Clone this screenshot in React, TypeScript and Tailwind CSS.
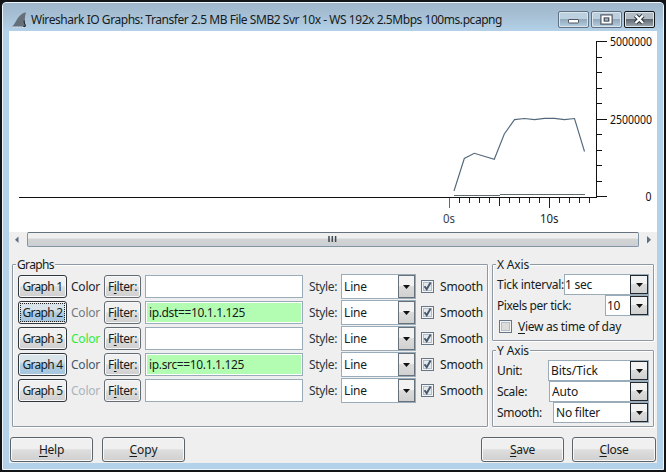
import React, { useLayoutEffect, useRef, useState } from "react";

/** Text drawn at an exact width by spreading the difference over its letters. */
function Fit({ text, w, cls = "", u }: { text: string; w: number; cls?: string; u?: number }) {
  const ref = useRef<HTMLSpanElement>(null);
  const [gap, setGap] = useState(0);
  useLayoutEffect(() => {
    const el = ref.current;
    if (el) setGap((w - el.getBoundingClientRect().width) / text.length);
  }, [text, w]);
  return (
    <span className={`block shrink-0 whitespace-pre ${cls}`} style={{ width: w }}>
      <span ref={ref} className="inline-block" style={{ letterSpacing: gap }}>
        {u === undefined ? (
          text
        ) : (
          <>
            {text.slice(0, u)}
            <span className="underline underline-offset-2">{text[u]}</span>
            {text.slice(u + 1)}
          </>
        )}
      </span>
    </span>
  );
}

function Shark() {
  return (
    <svg width="15" height="16" viewBox="0 0 15 16" className="ml-[9px] mt-[9px] shrink-0">
      <path d="M0 14.6C4 12 5 2 14 0.2C12.4 5 12.4 10 14 14.6Z" fill="#66707a" />
      <path d="M12.2 8.5V11L13.3 13V14.5H11" stroke="#20262c" fill="none" />
      <path d="M1 15.3H14" stroke="#d5dde2" strokeDasharray="2 1" />
    </svg>
  );
}

function TitleButton({ kind }: { kind: "min" | "max" | "close" }) {
  const tone =
    kind === "close"
      ? "border-[#14191d] bg-linear-to-b from-[#b3bcc4] from-45% via-[#606a73] via-50% to-[#a3abb2]"
      : "border-[#5f7182] bg-linear-to-b from-[#bdd0df] from-45% via-[#93a9bc] via-50% to-[#b6cfe2]";
  return (
    <div className={`flex h-[17px] w-[31px] items-center justify-center rounded-[2px] border shadow-[inset_0_0_0_1px_#dce5eb] ${tone}`}>
      <svg width="15" height="13" viewBox="0 0 15 13">
        {kind === "min" && <rect x="2.5" y="6.5" width="10" height="3.5" rx="0.5" fill="#fff" stroke="#505761" />}
        {kind === "max" && (
          <>
            <rect x="3" y="3" width="9" height="7" fill="none" stroke="#505761" strokeWidth="3.4" />
            <rect x="3.5" y="3.5" width="8" height="6" fill="none" stroke="#fff" strokeWidth="2" />
            <rect x="5.5" y="5" width="4" height="3" fill="#a7bccd" stroke="#505761" />
          </>
        )}
        {kind === "close" && (
          <>
            <path d="M3.5 2.5L11 10M11 2.5L3.5 10" stroke="#2c3339" strokeWidth="4.4" />
            <path d="M3.5 2.5L11 10M11 2.5L3.5 10" stroke="#fff" strokeWidth="2.4" />
          </>
        )}
      </svg>
    </div>
  );
}

const minorY = [57.5, 72.5, 88.5, 103.5, 134.5, 150.5, 165.5, 181.5];

function Chart() {
  const ticks = Array.from({ length: 15 }, (_, i) => 449.5 + i * 10);
  return (
    <svg width="648" height="201" viewBox="9 31 648 201" className="block bg-white" fontFamily="'Noto Sans', sans-serif" fontSize="12" fill="#111">
      <g stroke="#111" fill="none" shapeRendering="crispEdges">
        <path d="M19 197.5H597" />
        <path d="M596.5 41V197" />
        <path d="M596 41.5H607M596 119.5H607M596 196.5H607" />
        {minorY.map((y) => (
          <path key={y} d={`M596 ${y}H602`} />
        ))}
        {ticks.map((x, i) => (
          <path key={x} d={`M${x} 198V${i % 10 === 0 ? 208 : i === 5 ? 206 : 203}`} stroke={i === 0 ? "#5b6b79" : "#222"} />
        ))}
      </g>
      <path
        d="M454 191L464.3 158.5L474.3 153.3L494.3 159.3L504.3 134L514.5 119.6L524.5 118.5L534.5 119.6L544.5 118.4L554.5 118.4L564.5 119.6L574.5 118.5L584.5 151.5"
        fill="none"
        stroke="#53687c"
        strokeWidth="1.15"
      />
      <path d="M454 195.5H500M500 194.5H585" stroke="#606b70" />
      <text x="610" y="46" textLength="42" lengthAdjust="spacingAndGlyphs">5000000</text>
      <text x="610" y="124" textLength="42" lengthAdjust="spacingAndGlyphs">2500000</text>
      <text x="645.5" y="201" textLength="6" lengthAdjust="spacingAndGlyphs">0</text>
      <text x="443" y="223" textLength="12" lengthAdjust="spacingAndGlyphs" fill="#37424c">0s</text>
      <text x="540" y="223" textLength="18.5" lengthAdjust="spacingAndGlyphs" fill="#222">10s</text>
    </svg>
  );
}

function ScrollBar() {
  return (
    <div className="flex h-4 items-center bg-[#efefef]">
      <svg width="18" height="16" viewBox="0 0 18 16">
        <path d="M9.5 4.5V11L6 7.7Z" fill="#5f7080" />
      </svg>
      <div className="flex h-[15px] w-[612px] items-center justify-center self-start rounded-[2px] border border-[#8195a5] border-t-[#65727d] bg-linear-to-b from-[#efefef] from-40% via-[#d3d3d3] via-45% to-[#cbd0d4]">
        <svg width="9" height="7" viewBox="0 0 9 7" className="mb-px mr-[2px]">
          <path d="M1 0V6M4.3 0V6M7.6 0V6" stroke="#3d4852" strokeWidth="1.5" />
        </svg>
      </div>
      <svg width="18" height="16" viewBox="0 0 18 16">
        <path d="M8 4V11.5L12 7.7Z" fill="#5f7080" />
      </svg>
    </div>
  );
}

function Panel({ title, tw, cls, children }: { title: string; tw: number; cls: string; children: React.ReactNode }) {
  return (
    <div className={`relative rounded-[1px] border border-[#8d9aa5] shadow-[1px_1px_0_#fff,inset_1px_1px_0_#fff] ${cls}`}>
      <div className="absolute -top-[9px] left-[3px] h-[17px] bg-[#efefef] px-px leading-[17px]">
        <Fit text={title} w={tw} />
      </div>
      {children}
    </div>
  );
}

function Combo({ value, w, vw, h, wide, pl = "pl-[2px]", dark }: { value: string; w: string; vw: number; h: string; wide?: boolean; pl?: string; dark?: boolean }) {
  return (
    <div className={`flex shrink-0 items-stretch border border-[#9aabb9] bg-white ${w} ${h}`}>
      <div className={`flex flex-1 items-center ${pl}`}>
        <Fit text={value} w={vw} />
      </div>
      <div
        className={`flex items-center justify-center border bg-linear-to-b from-[#f2f2f2] from-45% via-[#dcdcdc] via-50% to-[#d0d0d0] ${wide ? "w-[18px]" : "w-[17px]"} ${
          dark ? "border-[#22282d]" : "border-[#66717b]"
        }`}
      >
        <svg width="7" height="4" viewBox="0 0 7 4">
          <path d="M0 0H7L3.5 4Z" fill="#111" />
        </svg>
      </div>
    </div>
  );
}

function Check({ on }: { on?: boolean }) {
  return (
    <svg width="13" height="13" viewBox="0 0 13 13" className="shrink-0">
      <rect x="0.5" y="0.5" width="12" height="12" fill="#f4f4f4" stroke="#667686" />
      <rect x="2.5" y="2.5" width="8" height="8" fill={on ? "#e4e9ed" : "#dcdcdc"} stroke="#b5bec6" />
      {on && <path d="M3.5 6.3L5.7 9.3L9.6 2.5" fill="none" stroke="#43586d" strokeWidth="1.9" />}
    </svg>
  );
}

const grey = "bg-linear-to-b from-[#f0f0f0] from-45% via-[#dedede] via-52% to-[#cfcfcf]";
const blue = "bg-linear-to-b from-[#d9e3ea] from-35% via-[#aecbe1] via-55% to-[#a5c6df]";

const rows = [
  { n: 1, color: "text-[#1c252c]", filter: "", fw: 0 },
  { n: 2, color: "text-[#75797e]", filter: "ip.dst==10.1.1.125", fw: 96 },
  { n: 3, color: "text-[#30ec40]", filter: "", fw: 0 },
  { n: 4, color: "text-[#44576a]", filter: "ip.src==10.1.1.125", fw: 95 },
  { n: 5, color: "text-[#a9b3bd]", filter: "", fw: 0 },
];

function GraphRow({ n, color, filter, fw }: (typeof rows)[number]) {
  const on = filter !== "";
  return (
    <div className="flex h-[26px] items-center pb-px">
      <div className={`flex h-[23px] w-[49px] items-center justify-center rounded-[3px] border border-[#2f363c] shadow-[inset_0_0_0_1px_#f8f8f8] ${on ? blue : grey}`}>
        <div className={`flex h-[19px] w-[45px] items-center justify-center border border-dotted ${n === 2 ? "border-[#222]" : "border-transparent"}`}>
          <Fit text={`Graph ${n}`} w={40} />
        </div>
      </div>
      <Fit text="Color" w={29} cls={`ml-[4px] ${color}`} />
      <div className={`ml-[4px] flex h-[23px] w-[37px] items-center justify-center rounded-[3px] border border-[#636c74] shadow-[inset_0_0_0_1px_#f8f8f8] ${grey}`}>
        <Fit text="Filter:" w={29} u={1} />
      </div>
      <div className="ml-[4px] h-[23px] w-[158px] border border-[#9aabb9] bg-white p-px">
        <div className={`flex h-full items-center pl-[2px] ${on ? "bg-[#b3fdb3]" : ""}`}>{on && <Fit text={filter} w={fw} />}</div>
      </div>
      <Fit text="Style:" w={28} cls="ml-[6px] text-[#2b3640]" />
      <Combo value="Line" w="w-[75px] ml-[4px]" vw={23} h="h-[25px]" dark={false} />
      <div className="ml-[5px] flex">
        <Check on />
      </div>
      <Fit text="Smooth" w={43} cls="ml-[6px]" />
    </div>
  );
}

function PushButton({ text, w, cls = "w-[83px]" }: { text: string; w: number; cls?: string }) {
  return (
    <div className={`flex h-[25px] items-center justify-center rounded-[3px] border border-[#5c646b] shadow-[inset_0_0_0_1px_#f8f8f8] ${grey} ${cls}`}>
      <Fit text={text} w={w} u={0} />
    </div>
  );
}

export default function App() {
  return (
    <div className="h-[472px] w-[666px] overflow-hidden bg-[#121517] p-[2px] font-['Noto_Sans',sans-serif] text-[12px] leading-[17px] text-[#161b20]">
      <div className="h-[468px] w-[662px] rounded-t-[4px] border border-[#eef5fa] bg-[#b3d1e8]">
        <div className="flex h-[28px] rounded-t-[3px] bg-linear-to-b from-[#9fb6ca] via-[#a8c1d6] to-[#b3d1e8]">
          <Shark />
          <Fit text="Wireshark IO Graphs: Transfer 2.5 MB File SMB2 Svr 10x - WS 192x 2.5Mbps 100ms.pcapng" w={471} cls="ml-[4px] mt-[8px]" />
          <div className="ml-auto mr-[8px] mt-[8px] flex gap-[2px]">
            <TitleButton kind="min" />
            <TitleButton kind="max" />
            <TitleButton kind="close" />
          </div>
        </div>
        <div className="ml-[6px] h-[432px] w-[648px] bg-[#efefef]">
          <Chart />
          <ScrollBar />
          <div className="flex gap-[4px] pl-[3px] pt-[16px]">
            <Panel title="Graphs" tw={37} cls="h-[163px] w-[476px] pl-[5px] pt-[9px]">
              {rows.map((r) => (
                <GraphRow key={r.n} {...r} />
              ))}
            </Panel>
            <div className="flex flex-col gap-[9px]">
              <Panel title="X Axis" tw={32} cls="h-[77px] w-[162px] pl-[4px] pr-[4px] pt-[9px]">
                <div className="flex h-[21px] items-center justify-between">
                  <Fit text="Tick interval:" w={67} />
                  <Combo value="1 sec" w="w-[85px]" vw={27} h="h-[21px]" pl="pl-0" wide dark />
                </div>
                <div className="flex h-[21px] items-center justify-between">
                  <Fit text="Pixels per tick:" w={74} />
                  <Combo value="10" w="w-[44px]" vw={13} h="h-[21px]" pl="pl-[1px]" wide dark />
                </div>
                <div className="flex h-[21px] items-center pl-[2px]">
                  <Check />
                  <Fit text="View as time of day" w={103} u={0} cls="ml-[6px]" />
                </div>
              </Panel>
              <Panel title="Y Axis" tw={32} cls="h-[77px] w-[162px] pl-[4px] pr-[4px] pt-[9px]">
                <div className="flex h-[21px] items-center justify-between">
                  <Fit text="Unit:" w={25} />
                  <Combo value="Bits/Tick" w="w-[101px]" vw={47} h="h-[21px]" wide dark />
                </div>
                <div className="flex h-[21px] items-center justify-between">
                  <Fit text="Scale:" w={30} />
                  <Combo value="Auto" w="w-[100px]" vw={26} h="h-[21px]" wide dark />
                </div>
                <div className="flex h-[21px] items-center justify-between">
                  <Fit text="Smooth:" w={45} />
                  <Combo value="No filter" w="w-[96px]" vw={44} h="h-[21px]" wide dark />
                </div>
              </Panel>
            </div>
          </div>
          <div className="mt-[10px] flex px-px">
            <PushButton text="Help" w={25} />
            <PushButton text="Copy" w={28} cls="ml-[9px] w-[83px]" />
            <PushButton text="Save" w={25} cls="ml-auto w-[83px]" />
            <PushButton text="Close" w={29} cls="ml-[8px] w-[84px]" />
          </div>
        </div>
      </div>
    </div>
  );
}
